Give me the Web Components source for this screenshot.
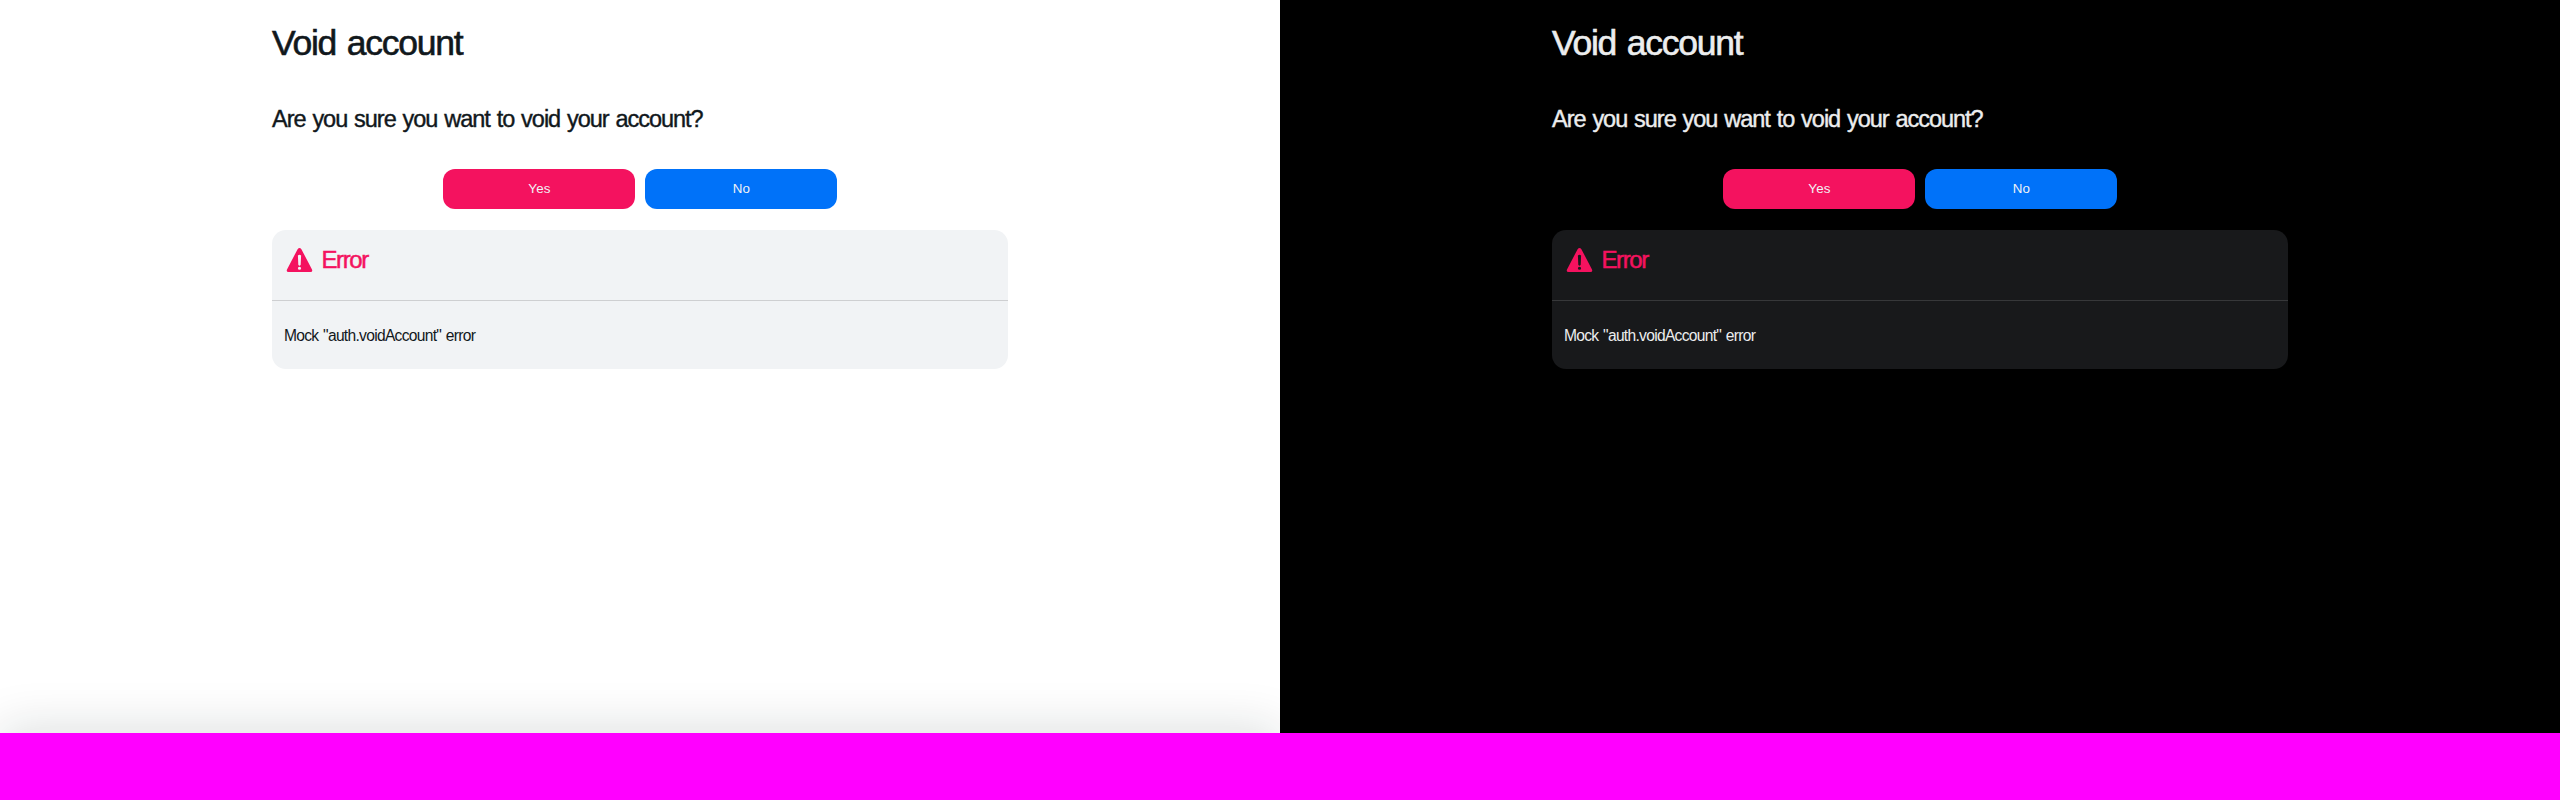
<!DOCTYPE html>
<html lang="en"><head><meta charset="utf-8"><title>Void account</title>
<style>
body{margin:0;background:#f0f;display:flex;height:800px;overflow:hidden;font-family:"Liberation Sans",Arial,sans-serif}
</style></head><body>
<void-screen theme="light"></void-screen><void-screen theme="dark"></void-screen>
<script>
class VoidButton extends HTMLElement{
  constructor(){super();this.attachShadow({mode:'open'}).innerHTML=`<style>
:host{display:block;width:192px;height:40px}
button{display:block;width:100%;height:100%;border:0;border-radius:12px;background:#0072f9;color:#f1f3f5;font:400 13.4px/16px "Liberation Sans",Arial,sans-serif;letter-spacing:.2px;padding:0 0 1px 1px}
:host([kind=danger]) button{background:#f4125f}
</style><button><slot></slot></button>`}
}
customElements.define('void-button',VoidButton);
class ErrorCard extends HTMLElement{
  constructor(){super();this.attachShadow({mode:'open'}).innerHTML=`<style>
:host{display:block;box-sizing:border-box;height:139px;border-radius:14px;background:var(--card);overflow:hidden}
header{display:flex;box-sizing:border-box;height:71px;border-bottom:1px solid var(--line);padding:17px 0 0 14px;color:#f4125f}
svg{display:block;width:27px;height:26px;flex:none}
h3{margin:0 0 0 8.5px;font-size:24px;font-weight:400;line-height:26px;letter-spacing:-1.4px;-webkit-text-stroke:.5px currentColor}
p{margin:0;padding:24px 12px 0;font-size:15.6px;line-height:22px;letter-spacing:-.7px;word-spacing:1px}
</style><header><svg viewBox="0 0 27 26"><path fill="currentColor" fill-rule="evenodd" d="M11.6 2.2Q13.5-.2 15.4 2.2L26 22.5Q27 25 24.4 25H2.6Q0 25 1 22.5ZM11.9 8.4Q13.5 7 15.1 8.4L14.7 17.8Q13.5 19.6 12.3 17.8ZM13.5 19.8A1.6 1.5 0 1 0 13.5 22.8A1.6 1.5 0 1 0 13.5 19.8Z"/></svg><h3>Error</h3></header><p><slot></slot></p>`}
}
customElements.define('error-card',ErrorCard);
class VoidScreen extends HTMLElement{
  constructor(){super();this.attachShadow({mode:'open'}).innerHTML=`<style>
:host{--bg:#fff;--fg:#11181c;--card:#f1f3f5;--line:#cecfd1;display:flex;flex-direction:column;width:1280px;height:733px;overflow:hidden;background:var(--bg);color:var(--fg)}
:host([theme=dark]){--bg:#000;--fg:#ecedee;--card:#18191b;--line:#37383a}
main{box-sizing:border-box;width:736px;height:733px;flex:none;margin:0 auto;padding-top:22px}
h1,h2{margin:0;font-weight:400;white-space:nowrap}
h1{font-size:35.5px;line-height:42px;letter-spacing:-1.25px;word-spacing:2px;-webkit-text-stroke:.6px currentColor}
h2{margin-top:40px;font-size:23.5px;line-height:30px;letter-spacing:-1.03px;word-spacing:1.4px;-webkit-text-stroke:.4px currentColor}
nav{display:flex;justify-content:center;gap:10px;margin:35px 0 21px}
footer{width:1280px;height:67px;flex:none;box-shadow:0 -5px 50px rgba(17,30,28,.14)}
:host([theme=dark]) footer{box-shadow:none}
</style><main><h1>Void account</h1><h2>Are you sure you want to void your account?</h2><nav><void-button kind="danger">Yes</void-button><void-button>No</void-button></nav><error-card>Mock "auth.voidAccount" error</error-card></main><footer></footer>`}
}
customElements.define('void-screen',VoidScreen);
</script></body></html>
